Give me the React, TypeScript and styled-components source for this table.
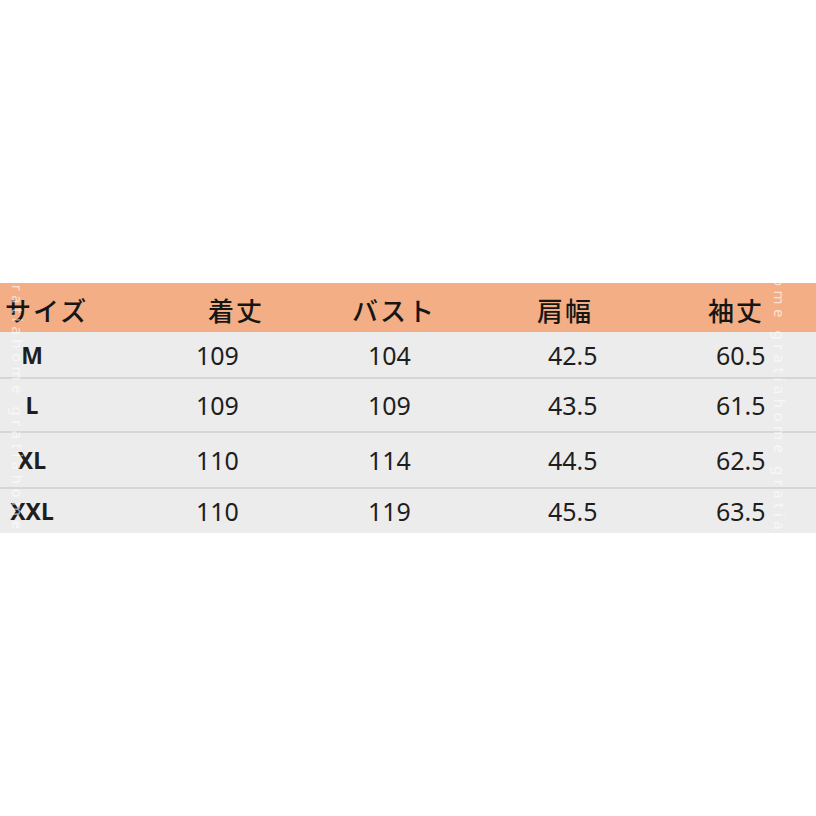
import styled, { createGlobalStyle } from 'styled-components';

const GlobalStyle = createGlobalStyle`
  html, body {
    margin: 0;
    padding: 0;
    background: #fff;
  }
  body {
    font-family: "Noto Sans", "Noto Sans CJK JP", sans-serif;
  }
`;

const headers = ['サイズ', '着丈', 'バスト', '肩幅', '袖丈'];

const rows = [
  ['M', '109', '104', '42.5', '60.5'],
  ['L', '109', '109', '43.5', '61.5'],
  ['XL', '110', '114', '44.5', '62.5'],
  ['XXL', '110', '119', '45.5', '63.5'],
];

const rowHeights = [45, 52, 54, 44];

const mark = 'gratiahome gratiahome gratiahome';

const App = () => (
  <Page>
    <GlobalStyle />
    <Table>
      <Head>
        {headers.map((h, i) => (
          <HeadCell key={h} $first={i === 0}>{h}</HeadCell>
        ))}
      </Head>
      {rows.map((r, i) => (
        <Row key={r[0]} $h={rowHeights[i]} $last={i === rows.length - 1}>
          <SizeCell>{r[0]}</SizeCell>
          {r.slice(1).map((v, j) => (
            <Cell key={j}>{v}</Cell>
          ))}
        </Row>
      ))}
      <Watermark $side="left" $offset={-12}>{mark}</Watermark>
      <Watermark $side="right" $offset={-88}>{mark}</Watermark>
    </Table>
  </Page>
);

const Page = styled.div`
  width: 816px;
  height: 816px;
  padding-top: 283px;
  box-sizing: border-box;
  background: #fff;
`;

const Table = styled.div`
  position: relative;
  overflow: hidden;
  display: flex;
  flex-direction: column;
`;

const Head = styled.div`
  height: 49px;
  background: #f3ae85;
  display: grid;
  grid-template-columns: 208px 144px 185px 171px 1fr;
  align-items: center;
  color: #161616;
  font-family: "Noto Sans CJK JP", sans-serif;
  font-size: 26px;
  font-weight: 500;
  letter-spacing: 2px;
`;

const HeadCell = styled.div<{ $first?: boolean }>`
  padding-left: ${(p) => (p.$first ? '5px' : '0')};
  margin-top: 4px;
  white-space: nowrap;
`;

const Row = styled.div<{ $h: number; $last?: boolean }>`
  height: ${(p) => p.$h}px;
  background: #ececec;
  border-bottom: ${(p) => (p.$last ? 'none' : '2px solid #d6d6d6')};
  display: grid;
  grid-template-columns: 196px 172px 180px 168px 1fr;
  align-items: center;
  color: #1e1e1e;
  font-size: 25px;
`;

const SizeCell = styled.div`
  width: 64px;
  text-align: center;
  font-weight: 700;
  font-size: 23px;
`;

const Cell = styled.div`
  white-space: nowrap;
`;

const Watermark = styled.div<{ $side: 'left' | 'right'; $offset: number }>`
  position: absolute;
  top: ${(p) => p.$offset}px;
  ${(p) => (p.$side === 'left' ? 'left: 8px;' : 'left: 770px;')}
  writing-mode: vertical-rl;
  font-family: "Noto Sans", sans-serif;
  font-size: 15px;
  letter-spacing: 4.5px;
  color: rgba(255, 255, 255, 0.65);
  white-space: nowrap;
  pointer-events: none;
`;

export default App;
